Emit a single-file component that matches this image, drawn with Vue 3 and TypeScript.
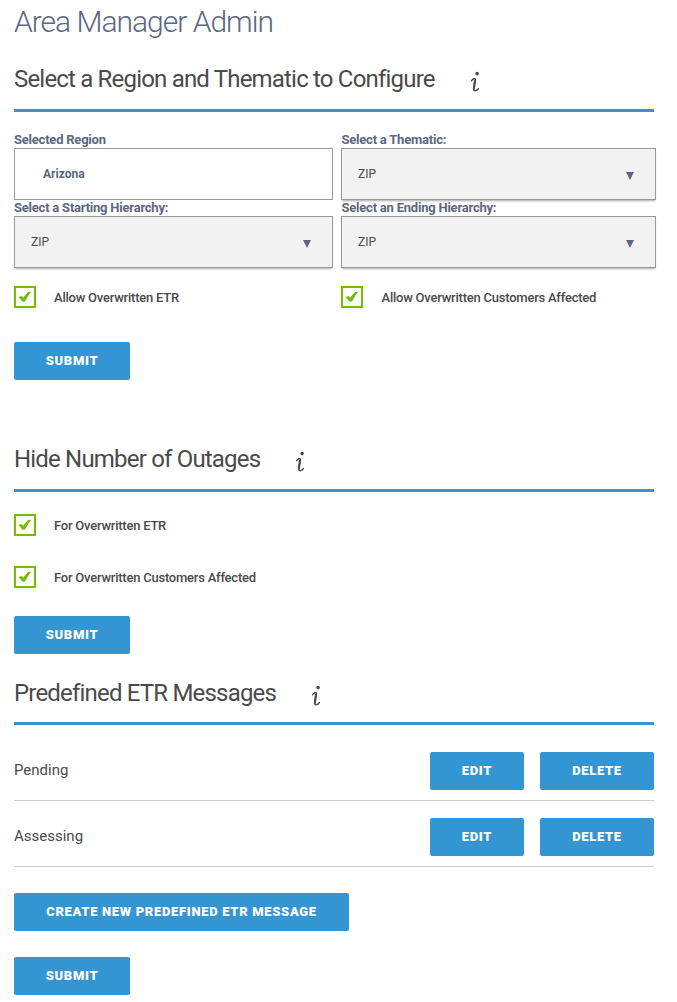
<script setup lang="ts">
import { ref } from 'vue'

interface Option {
  label: string
  checked: boolean
}

const infoPath = 'M1.6 9.8C2.6 7.8 4.9 6.9 5.5 8.3C6 10 3.2 15.9 3.6 18.4C4 20.5 7.2 19.8 8.4 17.6'
const tickPath = 'M0.6 5.9L3.8 5L5.3 6.8Q7.8 3 10 0.9L13.2 0.8Q9.8 5 7 10.6L4.5 10.8Z'

const overwriteOptions = ref<Option[]>([
  { label: 'Allow Overwritten ETR', checked: true },
  { label: 'Allow Overwritten Customers Affected', checked: true },
])
const hideOptions = ref<Option[]>([
  { label: 'For Overwritten ETR', checked: true },
  { label: 'For Overwritten Customers Affected', checked: true },
])
const messages = ref<string[]>(['Pending', 'Assessing'])
</script>

<template>
  <main class="page">
    <h1 class="title">Area Manager Admin</h1>

    <section>
      <h2 class="heading">
        <span>Select a Region and Thematic to Configure</span>
        <svg class="info" viewBox="0 0 11 22"><circle cx="7.1" cy="2.6" r="1.8" /><path :d="infoPath" /><path class="stem" d="M5 9.2L3.9 17.6" /></svg>
      </h2>
      <div class="fields">
        <div class="field">
          <span class="label">Selected Region</span>
          <div class="box region"><span>Arizona</span></div>
        </div>
        <div class="field">
          <span class="label">Select a Thematic:</span>
          <div class="box select"><span>ZIP</span><svg class="arrow" viewBox="0 0 8 8"><path d="M0 0H8L4 8Z" /></svg></div>
        </div>
        <div class="field">
          <span class="label">Select a Starting Hierarchy:</span>
          <div class="box select"><span>ZIP</span><svg class="arrow" viewBox="0 0 8 8"><path d="M0 0H8L4 8Z" /></svg></div>
        </div>
        <div class="field">
          <span class="label">Select an Ending Hierarchy:</span>
          <div class="box select"><span>ZIP</span><svg class="arrow" viewBox="0 0 8 8"><path d="M0 0H8L4 8Z" /></svg></div>
        </div>
      </div>
      <div class="checks pair">
        <div v-for="o in overwriteOptions" :key="o.label" class="check" @click="o.checked = !o.checked">
          <span class="tick"><svg v-if="o.checked" viewBox="0 0 14 12"><path :d="tickPath" /></svg></span>
          <span>{{ o.label }}</span>
        </div>
      </div>
      <button class="btn submit">SUBMIT</button>
    </section>

    <section class="hide">
      <h2 class="heading">
        <span>Hide Number of Outages</span>
        <svg class="info" viewBox="0 0 11 22"><circle cx="7.1" cy="2.6" r="1.8" /><path :d="infoPath" /><path class="stem" d="M5 9.2L3.9 17.6" /></svg>
      </h2>
      <div class="checks stack">
        <div v-for="o in hideOptions" :key="o.label" class="check" @click="o.checked = !o.checked">
          <span class="tick"><svg v-if="o.checked" viewBox="0 0 14 12"><path :d="tickPath" /></svg></span>
          <span>{{ o.label }}</span>
        </div>
      </div>
      <button class="btn submit">SUBMIT</button>
    </section>

    <section class="messages">
      <h2 class="heading">
        <span>Predefined ETR Messages</span>
        <svg class="info" viewBox="0 0 11 22"><circle cx="7.1" cy="2.6" r="1.8" /><path :d="infoPath" /><path class="stem" d="M5 9.2L3.9 17.6" /></svg>
      </h2>
      <ul class="list">
        <li v-for="m in messages" :key="m" class="row">
          <span class="name">{{ m }}</span>
          <button class="btn edit">EDIT</button>
          <button class="btn delete">DELETE</button>
        </li>
      </ul>
      <button class="btn create">CREATE NEW PREDEFINED ETR MESSAGE</button>
      <button class="btn submit">SUBMIT</button>
    </section>
  </main>
</template>

<style>
body {
  margin: 0;
  background: #fff;
}
</style>

<style scoped>
.page {
  box-sizing: border-box;
  height: 1002px;
  padding: 0 23px 0 14px;
  overflow: hidden;
  font-family: Roboto, sans-serif;
  font-size: 13px;
  color: #4a4a4a;
}
.title {
  margin: 0;
  height: 60px;
  font-size: 30px;
  line-height: 44px;
  font-weight: 300;
  letter-spacing: -1px;
  color: #5b6780;
  white-space: nowrap;
}
.heading {
  box-sizing: border-box;
  display: flex;
  margin: 0;
  height: 52px;
  border-bottom: 3px solid #3395d1;
  font-size: 24px;
  line-height: 38px;
  font-weight: 400;
  letter-spacing: -0.81px;
  white-space: nowrap;
}
.info {
  width: 11px;
  height: 22px;
  margin: 11px 0 0 35px;
  fill: #4a4a4a;
}
.info path {
  fill: none;
  stroke: #4a4a4a;
  stroke-width: 1.4;
  stroke-linecap: round;
}
.info .stem {
  stroke-width: 2.1;
}
.fields {
  display: grid;
  grid-template-columns: 319px 315px;
  column-gap: 8px;
  margin-top: 20px;
}
.field {
  height: 68px;
}
.label {
  display: block;
  height: 16px;
  line-height: 16px;
  font-weight: 700;
  font-size: 13px;
  letter-spacing: -0.22px;
  color: #5b6780;
  white-space: nowrap;
}
.field:nth-child(even) .label {
  padding-left: 0.5px;
}
.box {
  box-sizing: border-box;
  display: flex;
  align-items: center;
  height: 52px;
  border: 1px solid #999;
}
.region {
  padding-left: 28px;
  font-size: 12px;
  font-weight: 700;
  color: #5b6780;
}
.select {
  justify-content: space-between;
  padding: 0 21px 0 16px;
  background: #f2f2f2;
  box-shadow: 0 2px 2px -1px rgba(0, 0, 0, 0.35);
  font-size: 12px;
}
.arrow {
  width: 8px;
  height: 8px;
  margin-top: 4px;
  fill: #5b6780;
}
.checks {
  display: grid;
}
.pair {
  grid-template-columns: 319px 315px;
  column-gap: 8px;
  margin-top: 18px;
}
.stack {
  row-gap: 30px;
  margin-top: 22px;
}
.check {
  display: flex;
  align-items: center;
  gap: 18px;
  height: 22px;
  font-weight: 500;
  letter-spacing: -0.23px;
  white-space: nowrap;
}
.pair .check:nth-child(2) {
  gap: 18.5px;
}
.tick {
  box-sizing: border-box;
  display: flex;
  align-items: center;
  justify-content: center;
  width: 22px;
  height: 22px;
  border: 2px solid #76bc00;
}
.tick svg {
  width: 14px;
  height: 12px;
  fill: #76bc00;
}
.btn {
  display: block;
  height: 38px;
  padding: 0;
  border: 0;
  border-radius: 2px;
  background: #3395d1;
  color: #fff;
  font-family: Roboto, sans-serif;
  font-size: 13px;
  font-weight: 900;
  letter-spacing: 0.68px;
  line-height: 38px;
  white-space: nowrap;
}
.submit {
  width: 116px;
  margin-top: 34px;
}
.hide {
  margin-top: 60px;
}
.hide .submit {
  margin-top: 28px;
}
.messages {
  margin-top: 19px;
}
.messages .heading {
  line-height: 40px;
}
.messages .info {
  margin-top: 12px;
}
.list {
  margin: 0;
  padding: 17px 0 0;
  list-style: none;
}
.row {
  box-sizing: border-box;
  display: flex;
  align-items: flex-start;
  width: 640px;
  height: 66px;
  padding-top: 10px;
  border-bottom: 1px solid #ccc;
}
.row + .row {
  padding-top: 17px;
}
.row:first-child {
  height: 59px;
}
.name {
  flex: 1;
  font-size: 15px;
  line-height: 36px;
}
.edit {
  width: 94px;
  margin-right: 16px;
}
.delete {
  width: 114px;
}
.create {
  width: 335px;
  margin-top: 26px;
}
.messages .submit {
  margin-top: 26px;
}
</style>
